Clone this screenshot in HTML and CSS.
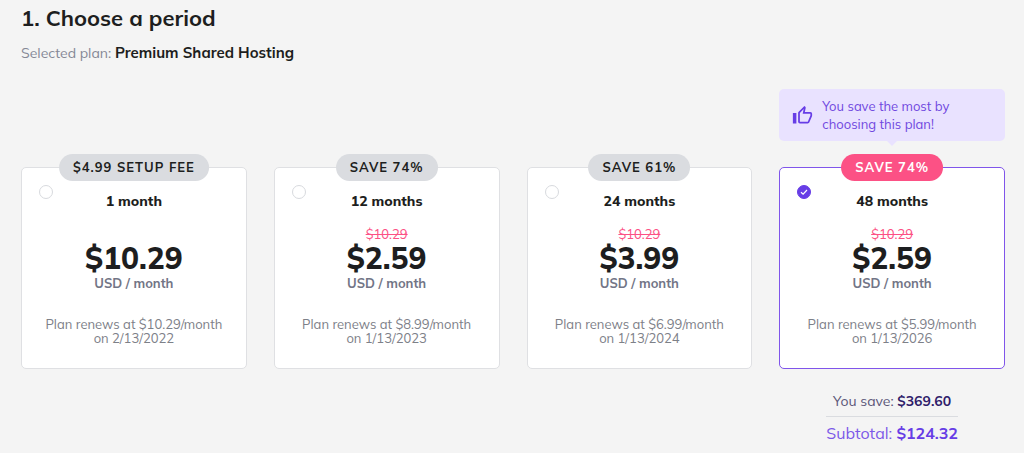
FILE: index.html
```
<!DOCTYPE html>
<html lang="en">
<head>
<meta charset="utf-8">
<meta name="viewport" content="width=device-width, initial-scale=1">
<title>Choose a period</title>
<link rel="stylesheet" href="styles.css">
</head>
<body>
<main class="page">
  <h1 class="title">1. Choose a period</h1>
  <p class="selected">Selected plan: <strong>Premium Shared Hosting</strong></p>

  <form class="plans">
    <div class="callout">
      <svg class="callout-icon" viewBox="0 0 24 24" aria-hidden="true"><path fill="currentColor" d="M5 9v12H1V9h4m4 12a2 2 0 0 1-2-2V9c0-.55.22-1.05.59-1.41L14.17 1l1.06 1.06c.27.27.44.65.44 1.05l-.03.32L14.69 8H21a2 2 0 0 1 2 2v2c0 .26-.05.5-.14.73l-3.02 7.05C19.54 20.5 18.83 21 18 21H9m0-2h9.03L21 12v-2h-8.79l1.13-5.32L9 9.03V19z"/></svg>
      <span>You save the most by choosing this plan!</span>
    </div>

    <label class="card">
      <span class="badge">$4.99 SETUP FEE</span>
      <input class="radio" type="radio" name="period" value="1">
      <span class="period">1 month</span>
      <span class="old"></span>
      <span class="price">$10.29</span>
      <span class="unit">USD / month</span>
      <span class="renew">Plan renews at $10.29/month<br>on 2/13/2022</span>
    </label>
    <label class="card">
      <span class="badge">SAVE 74%</span>
      <input class="radio" type="radio" name="period" value="12">
      <span class="period">12 months</span>
      <s class="old">$10.29</s>
      <span class="price">$2.59</span>
      <span class="unit">USD / month</span>
      <span class="renew">Plan renews at $8.99/month<br>on 1/13/2023</span>
    </label>
    <label class="card">
      <span class="badge">SAVE 61%</span>
      <input class="radio" type="radio" name="period" value="24">
      <span class="period">24 months</span>
      <s class="old">$10.29</s>
      <span class="price">$3.99</span>
      <span class="unit">USD / month</span>
      <span class="renew">Plan renews at $6.99/month<br>on 1/13/2024</span>
    </label>
    <label class="card card-active">
      <span class="badge badge-hot">SAVE 74%</span>
      <input class="radio" type="radio" name="period" value="48" checked>
      <svg class="tick" viewBox="0 0 14 14" aria-hidden="true"><path d="M4 7.2 6.1 9.2 10 5" fill="none" stroke="#fff" stroke-width="1.2"/></svg>
      <span class="period">48 months</span>
      <s class="old">$10.29</s>
      <span class="price">$2.59</span>
      <span class="unit">USD / month</span>
      <span class="renew">Plan renews at $5.99/month<br>on 1/13/2026</span>
    </label>

    <div class="summary">
      <p class="saving">You save: <strong>$369.60</strong></p>
      <p class="subtotal">Subtotal: <strong>$124.32</strong></p>
    </div>
  </form>
</main>
</body>
</html>
```
FILE: styles.css
```
* {
  box-sizing: border-box;
}

body {
  margin: 0;
  background: #f4f4f4;
  color: #1d1e20;
  font-family: Mulish, Muli, Lato, sans-serif;
  font-size: 13px;
}

.page {
  padding: 4px 19px 0 21px;
}

.title,
.selected,
.saving,
.subtotal {
  margin: 0;
}

.title {
  font-size: 22px;
  line-height: 28px;
  font-weight: 700;
}

.selected {
  margin-top: 11px;
  color: #858896;
  font-size: 14px;
  line-height: 20px;
}

.selected strong {
  color: #1d1e20;
  font-size: 15px;
  font-weight: 700;
}

.plans {
  display: grid;
  grid-template-columns: repeat(4, 1fr);
  column-gap: 27px;
  margin-top: 26px;
}

.callout {
  grid-column: 4;
  position: relative;
  display: flex;
  align-items: center;
  gap: 9px;
  margin-bottom: 26px;
  padding: 8px 40px 8px 13px;
  border-radius: 5px;
  background: #e9e2ff;
  color: #7048e0;
  line-height: 18px;
}

.callout::after {
  content: "";
  position: absolute;
  top: 100%;
  left: 50%;
  margin-left: -5px;
  border: 5px solid transparent;
  border-top-color: #e9e2ff;
  border-bottom: 0;
}

.callout-icon {
  flex: none;
  width: 21px;
  height: 21px;
  color: #673de6;
}

.card {
  position: relative;
  display: flex;
  flex-direction: column;
  align-items: center;
  padding: 24px 12px 23px;
  border: 1px solid #dfe0e3;
  border-radius: 5px;
  background: #fff;
  text-align: center;
  cursor: pointer;
}

.card-active {
  border-color: #8055ea;
}

.badge {
  position: absolute;
  top: -14px;
  left: 50%;
  transform: translateX(-50%);
  padding: 0 14px;
  border-radius: 14px;
  background: #dadce0;
  font-size: 13px;
  line-height: 27px;
  font-weight: 700;
  letter-spacing: 1px;
  white-space: nowrap;
}

.badge-hot {
  background: #fc5185;
  color: #fff;
}

.radio,
.tick {
  position: absolute;
  top: 17px;
  left: 17px;
  width: 14px;
  height: 14px;
}

.radio {
  appearance: none;
  margin: 0;
  border: 1px solid #d8dade;
  border-radius: 50%;
  background: #fff;
}

.radio:checked {
  border-color: #673de6;
  background: #673de6;
}

.period {
  font-size: 14px;
  line-height: 18px;
  font-weight: 800;
}

.old {
  height: 16px;
  margin-top: 16px;
  color: #fc5185;
  line-height: 16px;
}

.price {
  font-size: 30px;
  line-height: 32px;
  font-weight: 800;
}

.unit {
  color: #727586;
  line-height: 18px;
  font-weight: 700;
}

.renew {
  margin-top: 25px;
  color: #7d8088;
  line-height: 14px;
}

.summary {
  grid-column: 4;
  justify-self: center;
  margin-top: 22px;
  text-align: center;
}

.saving {
  padding-bottom: 5px;
  border-bottom: 1px solid #dadce0;
  color: #5b5678;
  font-size: 14px;
  line-height: 20px;
}

.saving strong {
  color: #2f1c6a;
}

.subtotal {
  margin-top: 5px;
  color: #7c59e8;
  font-size: 16px;
  line-height: 22px;
}

.subtotal strong {
  color: #673de6;
}
```
